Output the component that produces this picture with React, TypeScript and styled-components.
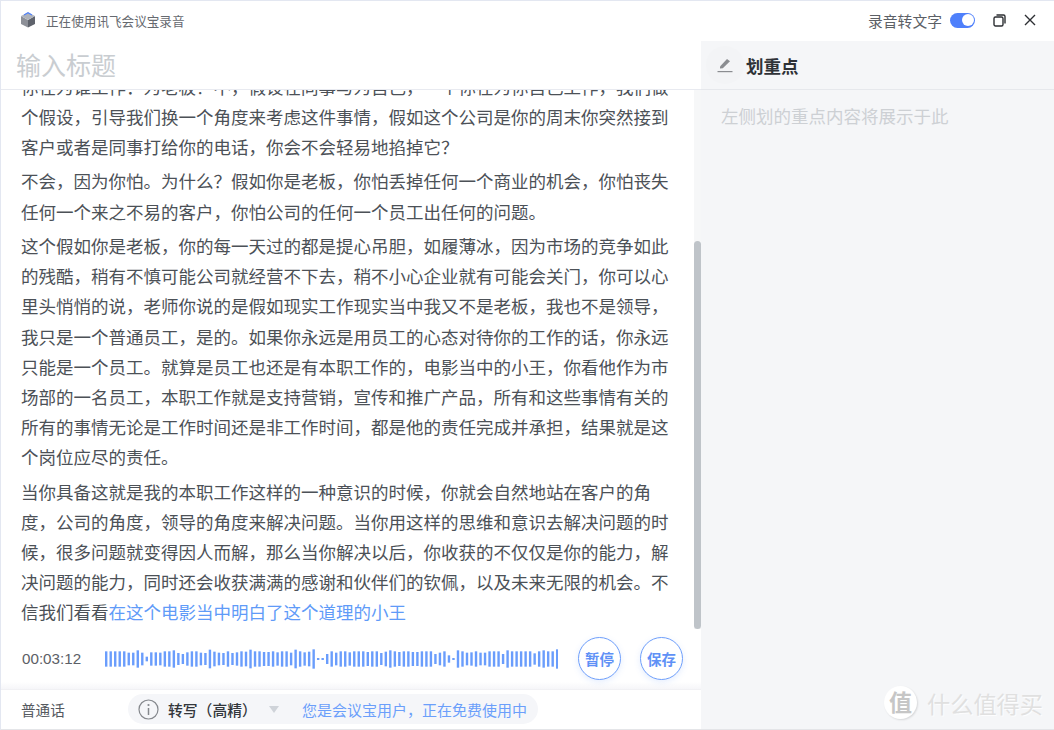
import React from "react";
import styled, { createGlobalStyle } from "styled-components";

const Global = createGlobalStyle`
  html, body { margin: 0; padding: 0; background: #fff; }
  * { box-sizing: border-box; }
  body { font-family: "Noto Sans CJK SC", "Liberation Sans", sans-serif; }
`;

const Win = styled.div`
  position: relative;
  width: 1054px;
  height: 730px;
  display: flex;
  flex-direction: column;
  background: #fff;
  overflow: hidden;
  border-top: 1px solid #e3e7f1;
  border-left: 1px solid #e3e7f1;
  border-bottom: 1px solid #e4e5e8;
`;
const TopBar = styled.header`
  flex: 0 0 40px;
  display: flex;
  align-items: center;
  padding: 0 18px 2px 19px;
`;
const AppTitle = styled.span`
  margin-left: 10px;
  font-size: 12.6px;
  color: #666a70;
  flex: 1;
`;
const ModeLabel = styled.span`
  font-size: 14.8px;
  color: #5c6066;
  margin-right: 2px;
`;
const Toggle = styled.span`
  margin-left: 6px;
  width: 25px;
  height: 15px;
  border-radius: 8px;
  background: #4f80fb;
  display: flex;
  align-items: center;
  justify-content: flex-end;
  padding-right: 1.5px;
`;
const Knob = styled.span`
  width: 12px;
  height: 12px;
  border-radius: 50%;
  background: #fff;
`;
const IconBtn = styled.span<{ $gap: number }>`
  margin-left: ${(p) => p.$gap}px;
  display: flex;
`;
const Body = styled.div`
  flex: 1;
  min-height: 0;
  display: flex;
`;
const Left = styled.section`
  position: relative;
  width: 700px;
  display: flex;
  flex-direction: column;
`;
const TitleBar = styled.div`
  flex: 0 0 49px;
  display: flex;
  align-items: center;
  padding-left: 15px;
  border-bottom: 1px solid #e8eaf0;
  font-size: 25px;
  color: #c9cdd1;
  padding-bottom: 2px;
`;
const Scroller = styled.div`
  flex: 1;
  min-height: 0;
  overflow: hidden;
  padding-right: 31px;
  padding-left: 20px;
  border-right: 7px solid #f6f7f8;
`;
const Article = styled.div`
  margin-top: -18.5px;
  width: 650px;
  font-size: 17.5px;
  line-height: 30.15px;
  color: #4c5157;
`;
const Para = styled.p`
  margin: 0 0 4.4px;
`;
const Link = styled.span`
  color: #5f9bf8;
`;
const Thumb = styled.div`
  position: absolute;
  right: 0;
  top: 200px;
  width: 7px;
  height: 388px;
  background: #bfc4c9;
  border-radius: 4px;
`;
const Controls = styled.div`
  flex: 0 0 60px;
  display: flex;
  align-items: center;
  padding: 0 17px 1px 21px;
  background: linear-gradient(#fff 88%, #f6f6f9);
`;
const Time = styled.span`
  font-family: "Liberation Sans", sans-serif;
  font-size: 15.2px;
  color: #5c6066;
  width: 83px;
`;
const RoundBtn = styled.button<{ $gap: number }>`
  width: 43px;
  height: 43px;
  margin-left: ${(p) => p.$gap}px;
  padding: 0;
  border: 1px solid #6f9ffb;
  border-radius: 50%;
  background: #fff;
  color: #5f91f6;
  font: 700 14.5px "Noto Sans CJK SC", sans-serif;
  box-shadow: 0 2px 6px rgba(90, 140, 250, 0.16);
`;
const Footer = styled.footer`
  flex: 0 0 40px;
  display: flex;
  align-items: center;
  padding-left: 20px;
  padding-bottom: 1px;
  border-top: 1px solid #f1f1f4;
`;
const Lang = styled.span`
  font-size: 14.6px;
  color: #55595f;
  width: 107px;
`;
const Pill = styled.div`
  width: 410px;
  height: 30px;
  border-radius: 15px;
  background: #f5f6f9;
  display: flex;
  align-items: center;
  padding-left: 10px;
`;
const Engine = styled.span`
  margin-left: 9px;
  font-size: 14.8px;
  font-weight: 500;
  color: #33373c;
  width: 90px;
  white-space: nowrap;
`;
const Caret = styled.span`
  margin-left: 11px;
  width: 0;
  height: 0;
  border-left: 5.5px solid transparent;
  border-right: 5.5px solid transparent;
  border-top: 7px solid #cfd3d9;
`;
const Notice = styled.span`
  margin-left: 23px;
  font-size: 15px;
  color: #6b9ffb;
  white-space: nowrap;
`;
const Right = styled.aside`
  flex: 1;
  background: #f5f6f8;
  display: flex;
  flex-direction: column;
`;
const SideHead = styled.div`
  flex: 0 0 49px;
  display: flex;
  align-items: center;
  border-bottom: 1px solid #e6e8ec;
  padding-left: 5px;
`;
const PenHalo = styled.span`
  width: 38px;
  height: 38px;
  border-radius: 50%;
  background: #f3f4f6;
  display: flex;
  align-items: center;
  justify-content: center;
`;
const SideTitle = styled.h2`
  margin: 0 0 0 2px;
  font-size: 17.5px;
  font-weight: 700;
  color: #2f3237;
`;
const Placeholder = styled.div`
  padding: 11px 0 0 20px;
  font-size: 17.5px;
  line-height: 30px;
  color: #cdd0d4;
`;
const Watermark = styled.div`
  position: absolute;
  right: 11px;
  bottom: 10px;
  display: flex;
  align-items: center;
  gap: 10px;
`;
const WmBadge = styled.span`
  width: 33px;
  height: 33px;
  border-radius: 50%;
  background: #fff;
  color: #c6c6c6;
  font-size: 23px;
  line-height: 31px;
  font-weight: 700;
  text-align: center;
  box-shadow: 1px 1px 2px rgba(0, 0, 0, 0.12);
`;
const WmText = styled.span`
  font-size: 23.2px;
  line-height: 30px;
  color: #e0e0e0;
  text-shadow: 1px 1px 1px rgba(255, 255, 255, 0.9);
`;

const bars = [
  46,46,46,46,46,38,38,52,38,14,40,40,38,46,46,52,36,30,40,46,46,38,36,56,44,38,36,46,36,40,46,44,56,46,46,42,42,46,40,46,46,38,56,46,40,44,58,6,6,30,46,
  38,46,46,40,46,46,46,42,46,46,36,44,52,46,42,46,46,42,42,46,46,46,30,38,46,22,6,52,46,38,40,46,38,38,46,46,46,30,52,46,46,46,46,46,34,46,52,46,46,58,
];

const Wave = () => (
  <svg width="453" height="24" viewBox="0 0 453 24" style={{ display: "block" }}>
    {bars.map((h, i) => (
      <rect key={i} x={i * 4.51} y={12 - h / 6} width="2.4" height={h / 3} fill="#6a9dfc" />
    ))}
  </svg>
);

const Logo = () => (
  <svg width="16" height="16" viewBox="0 0 16 16">
    <path d="M8 8 L15 4 V12 L8 15.5 Z" fill="#5f636c" />
    <path d="M8 8 L1 4 V12 L8 15.5 Z" fill="#8d9098" />
    <path d="M1 4 L8 0.5 L15 4 L8 8 Z" fill="#aeb2ba" />
    <path d="M4 3 L8 0.7 L12 3" stroke="#4f80fb" strokeWidth="1.1" fill="none" />
  </svg>
);

const RestoreIcon = () => (
  <svg width="13" height="13" viewBox="0 0 13 13" fill="none" stroke="#2d2f33" strokeWidth="1.4">
    <rect x="1" y="3" width="9" height="9" rx="1.5" />
    <path d="M3.5 1 H10.5 A1.5 1.5 0 0 1 12 2.5 V9.5" />
  </svg>
);

const CloseIcon = () => (
  <svg width="12" height="12" viewBox="0 0 12 12" stroke="#2d2f33" strokeWidth="1.4">
    <path d="M1 1 L11 11 M11 1 L1 11" />
  </svg>
);

const InfoIcon = () => (
  <svg width="21" height="21" viewBox="0 0 21 21" fill="none">
    <circle cx="10.5" cy="10.5" r="9.5" stroke="#85888d" strokeWidth="1.2" />
    <circle cx="10.5" cy="6" r="1.1" fill="#85888d" />
    <path d="M10.5 9 V16" stroke="#85888d" strokeWidth="1.5" />
  </svg>
);

const PenIcon = () => (
  <svg width="16" height="16" viewBox="0 0 16 16" fill="#8b8d91">
    <path d="M3 9.5 L10 2 L13 4.2 L5.8 11.2 L3 11.6 Z" />
    <rect x="0.5" y="14" width="15" height="1.2" />
  </svg>
);

export default function App() {
  return (
    <Win>
      <Global />
      <TopBar>
        <Logo />
        <AppTitle>正在使用讯飞会议宝录音</AppTitle>
        <ModeLabel>录音转文字</ModeLabel>
        <Toggle><Knob /></Toggle>
        <IconBtn $gap={18}><RestoreIcon /></IconBtn>
        <IconBtn $gap={18}><CloseIcon /></IconBtn>
      </TopBar>
      <Body>
        <Left>
          <TitleBar>输入标题</TitleBar>
          <Scroller>
            <Article>
              <Para>你在为谁工作：为老板？不，假设在同事与为自己，一个你在为你自己工作，我们做个假设，引导我们换一个角度来考虑这件事情，假如这个公司是你的周末你突然接到客户或者是同事打给你的电话，你会不会轻易地掐掉它？</Para>
              <Para>不会，因为你怕。为什么？假如你是老板，你怕丢掉任何一个商业的机会，你怕丧失任何一个来之不易的客户，你怕公司的任何一个员工出任何的问题。</Para>
              <Para>这个假如你是老板，你的每一天过的都是提心吊胆，如履薄冰，因为市场的竞争如此的残酷，稍有不慎可能公司就经营不下去，稍不小心企业就有可能会关门，你可以心里头悄悄的说，老师你说的是假如现实工作现实当中我又不是老板，我也不是领导，我只是一个普通员工，是的。如果你永远是用员工的心态对待你的工作的话，你永远只能是一个员工。就算是员工也还是有本职工作的，电影当中的小王，你看他作为市场部的一名员工，本职工作就是支持营销，宣传和推广产品，所有和这些事情有关的所有的事情无论是工作时间还是非工作时间，都是他的责任完成并承担，结果就是这个岗位应尽的责任。</Para>
              <Para>当你具备这就是我的本职工作这样的一种意识的时候，你就会自然地站在客户的角度，公司的角度，领导的角度来解决问题。当你用这样的思维和意识去解决问题的时候，很多问题就变得因人而解，那么当你解决以后，你收获的不仅仅是你的能力，解决问题的能力，同时还会收获满满的感谢和伙伴们的钦佩，以及未来无限的机会。不信我们看看<Link>在这个电影当中明白了这个道理的小王</Link></Para>
            </Article>
          </Scroller>
          <Thumb />
          <Controls>
            <Time>00:03:12</Time>
            <Wave />
            <RoundBtn $gap={20}>暂停</RoundBtn>
            <RoundBtn $gap={19}>保存</RoundBtn>
          </Controls>
          <Footer>
            <Lang>普通话</Lang>
            <Pill>
              <InfoIcon />
              <Engine>转写（高精）</Engine>
              <Caret />
              <Notice>您是会议宝用户，正在免费使用中</Notice>
            </Pill>
          </Footer>
        </Left>
        <Right>
          <SideHead>
            <PenHalo><PenIcon /></PenHalo>
            <SideTitle>划重点</SideTitle>
          </SideHead>
          <Placeholder>左侧划的重点内容将展示于此</Placeholder>
        </Right>
      </Body>
      <Watermark>
        <WmBadge>值</WmBadge>
        <WmText>什么值得买</WmText>
      </Watermark>
    </Win>
  );
}
